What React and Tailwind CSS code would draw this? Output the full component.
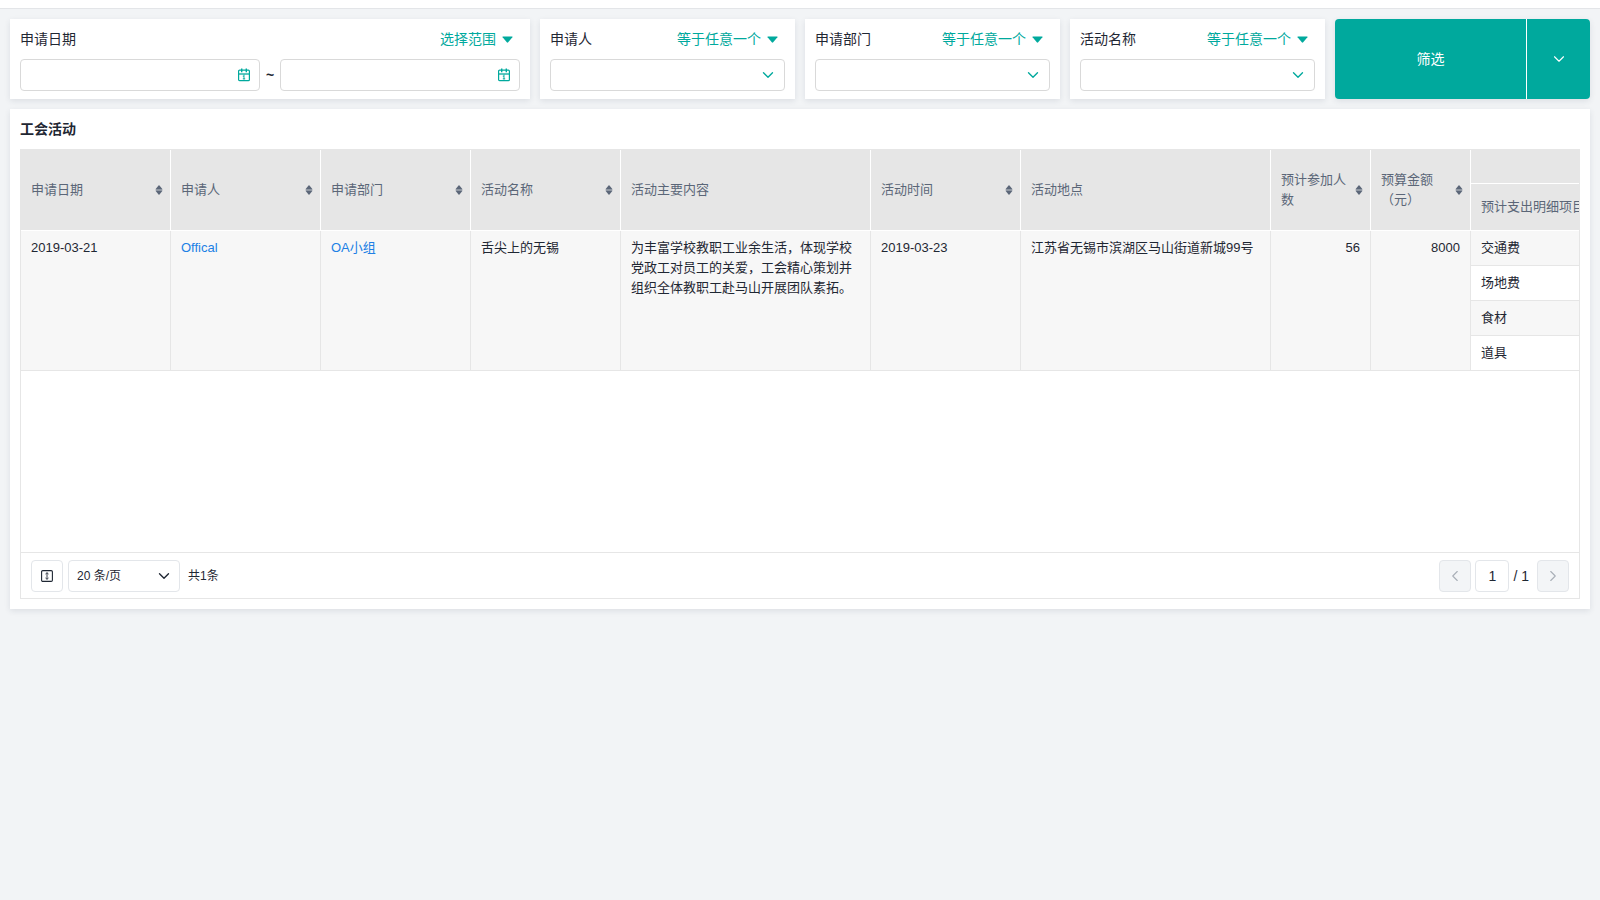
import { useState } from 'react'
import { ChevronDown, ChevronLeft, ChevronRight } from 'lucide-react'

const CHOICE_FILTERS = [
  { id: 'applicant', label: '申请人' },
  { id: 'department', label: '申请部门' },
  { id: 'activity', label: '活动名称' },
]

const COLUMNS = [
  { key: 'date', label: '申请日期', sortable: true },
  { key: 'applicant', label: '申请人', sortable: true, link: true },
  { key: 'department', label: '申请部门', sortable: true, link: true },
  { key: 'name', label: '活动名称', sortable: true },
  { key: 'content', label: '活动主要内容', wide: true },
  { key: 'time', label: '活动时间', sortable: true },
  { key: 'place', label: '活动地点', wide: true },
  { key: 'people', label: '预计参加人数', sortable: true, numeric: true },
  { key: 'budget', label: '预算金额（元）', sortable: true, numeric: true },
]

const ROWS = [
  {
    id: 1,
    date: '2019-03-21',
    applicant: 'Offical',
    department: 'OA小组',
    name: '舌尖上的无锡',
    content: '为丰富学校教职工业余生活，体现学校党政工对员工的关爱，工会精心策划并组织全体教职工赴马山开展团队素拓。',
    time: '2019-03-23',
    place: '江苏省无锡市滨湖区马山街道新城99号',
    people: 56,
    budget: 8000,
    items: ['交通费', '场地费', '食材', '道具'],
  },
]

function CalendarIcon() {
  return (
    <svg width="14" height="14" viewBox="0 0 14 14" fill="none" stroke="currentColor" aria-hidden="true">
      <rect x="1.6" y="2.1" width="10.8" height="10.6" rx="1" strokeWidth="1.2" />
      <path d="M1.6 6h10.8" strokeWidth="1.3" />
      <path d="M4.7 0.6v3.6M9.3 0.6v3.6" strokeWidth="1.4" />
      <path d="M7 6.5v5M5.8 8.2h1.2M5.8 10.8h2.4" strokeWidth="0.9" />
    </svg>
  )
}

function SortIcon() {
  return (
    <svg width="8" height="10" viewBox="0 0 8 10" fill="currentColor" aria-hidden="true">
      <path d="M3.5 0.6q0.5-0.5 1 0L7.3 3.9q0.3 0.6-0.3 0.6H1q-0.6 0-0.3-0.6z" />
      <path d="M3.5 9.4q0.5 0.5 1 0L7.3 6.1q0.3-0.6-0.3-0.6H1q-0.6 0-0.3 0.6z" />
      <path d="M0.8 4.5h6.4v1H0.8z" opacity="0.45" />
    </svg>
  )
}

function RowHeightIcon() {
  return (
    <svg width="12" height="12" viewBox="0 0 12 12" fill="none" stroke="currentColor" aria-hidden="true">
      <rect x="0.6" y="0.6" width="10.8" height="10.8" rx="1.2" strokeWidth="1.1" />
      <path d="M6 3v6M4.5 4L6 2.6 7.5 4M4.5 8L6 9.4 7.5 8" strokeWidth="0.9" />
    </svg>
  )
}

function FilterCard({ label, htmlFor, mode, className = '', children }) {
  return (
    <div className={`bg-white px-[10px] pb-2 shadow-[0_2px_6px_rgba(30,40,70,0.10)] ${className}`}>
      <div className="flex h-10 items-center justify-between">
        <label htmlFor={htmlFor}>{label}</label>
        <button type="button" className="mr-[7px] flex items-center gap-[6px] text-[#00a99d]">
          {mode}
          <svg width="11" height="7" viewBox="0 0 11 7" fill="currentColor" aria-hidden="true">
            <path d="M1 0.4h9q0.9 0 0.4 0.8L6.2 6.3q-0.7 0.7-1.4 0L0.6 1.2Q0.1 0.4 1 0.4z" />
          </svg>
        </button>
      </div>
      {children}
    </div>
  )
}

function DateInput({ id, label }) {
  return (
    <div className="relative flex-1">
      <input
        id={id}
        type="text"
        aria-label={label}
        className="block h-8 w-full rounded border border-[#d9d9d9] bg-white pr-8 pl-2 outline-none"
      />
      <span className="pointer-events-none absolute inset-y-0 right-[9px] flex items-center text-[#00a99d]">
        <CalendarIcon />
      </span>
    </div>
  )
}

function ChoiceSelect({ id }) {
  return (
    <div className="relative">
      <select id={id} className="block h-8 w-full appearance-none rounded border border-[#d9d9d9] bg-white px-2 outline-none">
        <option value="" />
      </select>
      <span className="pointer-events-none absolute inset-y-0 right-2 flex items-center text-[#00a99d]">
        <ChevronDown size={18} strokeWidth={1.8} />
      </span>
    </div>
  )
}

function FilterBar() {
  return (
    <div className="grid grid-cols-6 gap-[10px]">
      <FilterCard label="申请日期" htmlFor="date-from" mode="选择范围" className="col-span-2">
        <div className="flex items-center">
          <DateInput id="date-from" label="申请日期 从" />
          <span className="w-5 text-center font-bold">~</span>
          <DateInput id="date-to" label="申请日期 至" />
        </div>
      </FilterCard>
      {CHOICE_FILTERS.map((filter) => (
        <FilterCard key={filter.id} label={filter.label} htmlFor={filter.id} mode="等于任意一个">
          <ChoiceSelect id={filter.id} />
        </FilterCard>
      ))}
      <div className="flex overflow-hidden rounded text-white shadow-[0_2px_6px_rgba(30,40,70,0.10)]">
        <button type="button" className="flex-1 bg-[#00a99d]">
          筛选
        </button>
        <button
          type="button"
          aria-label="更多"
          className="flex w-16 items-center justify-center border-l border-white bg-[#00a99d]"
        >
          <ChevronDown size={18} strokeWidth={1.5} />
        </button>
      </div>
    </div>
  )
}

function ActivityTable() {
  const th = 'border-r border-b border-white bg-[#e6e6e6] px-[10px] text-left font-normal'
  const td = 'border-r border-b border-[#e6e6e6] px-[10px] py-[7px] align-top'

  return (
    <div className="min-h-[402px] overflow-hidden">
      <table className="w-full min-w-[1600px] table-fixed border-separate border-spacing-0 text-[13px] leading-5">
        <colgroup>
          {COLUMNS.map((col) => (
            <col key={col.key} className={col.wide ? 'w-[250px]' : col.numeric ? 'w-[100px]' : 'w-[150px]'} />
          ))}
          <col />
        </colgroup>
        <thead className="text-[#5b6678]">
          <tr className="h-[34px]">
            {COLUMNS.map((col) => (
              <th key={col.key} rowSpan={2} scope="col" className={th}>
                <div className="flex items-center justify-between gap-2">
                  <span>{col.label}</span>
                  {col.sortable && (
                    <button type="button" aria-label={`${col.label} 排序`} className="-mr-[3px] shrink-0">
                      <SortIcon />
                    </button>
                  )}
                </div>
              </th>
            ))}
            <td className={th} />
          </tr>
          <tr className="h-[47px]">
            <th scope="col" className={`${th} whitespace-nowrap`}>
              预计支出明细项目
            </th>
          </tr>
        </thead>
        <tbody>
          {ROWS.map((row) =>
            row.items.map((item, i) => (
              <tr key={`${row.id}-${item}`}>
                {i === 0 &&
                  COLUMNS.map((col) => (
                    <td
                      key={col.key}
                      rowSpan={row.items.length}
                      className={`${td} bg-[#f7f7f7] ${col.numeric ? 'text-right' : ''}`}
                    >
                      {col.link ? (
                        <a href="#" className="text-[#2080e5]">
                          {row[col.key]}
                        </a>
                      ) : (
                        row[col.key]
                      )}
                    </td>
                  ))}
                <td className={`${td} ${i % 2 === 0 ? 'bg-[#f7f7f7]' : 'bg-white'}`}>{item}</td>
              </tr>
            )),
          )}
        </tbody>
      </table>
    </div>
  )
}

function Pagination() {
  const [page, setPage] = useState('1')
  const box = 'h-8 rounded border border-[#e3e6ea]'
  const arrow = `${box} flex w-8 items-center justify-center bg-[#f3f5f7] text-[#a9afb8]`

  return (
    <div className="flex items-center justify-between border-t border-[#e6e6e6] px-[10px] pt-[7px] pb-[6px]">
      <div className="flex items-center text-xs">
        <button type="button" aria-label="行高" className={`${box} flex w-8 items-center justify-center bg-white`}>
          <RowHeightIcon />
        </button>
        <div className="relative ml-[5px]">
          <select aria-label="每页条数" className={`${box} block w-28 appearance-none bg-white pr-8 pl-2 outline-none`}>
            <option>20 条/页</option>
          </select>
          <span className="pointer-events-none absolute inset-y-0 right-[7px] flex items-center">
            <ChevronDown size={18} strokeWidth={1.8} />
          </span>
        </div>
        <span className="ml-2">共1条</span>
      </div>
      <div className="flex items-center">
        <button type="button" aria-label="上一页" disabled className={arrow}>
          <ChevronLeft size={18} strokeWidth={1.5} />
        </button>
        <input
          type="text"
          aria-label="页码"
          value={page}
          onChange={(e) => setPage(e.target.value)}
          className={`${box} mx-1 w-[34px] bg-white text-center outline-none`}
        />
        <span>/ 1</span>
        <button type="button" aria-label="下一页" disabled className={`${arrow} ml-2`}>
          <ChevronRight size={18} strokeWidth={1.5} />
        </button>
      </div>
    </div>
  )
}

export default function App() {
  return (
    <div className="min-h-screen bg-[#f2f4f6] font-['Liberation_Sans','Noto_Sans_CJK_SC',sans-serif] text-sm text-[#1f2733]">
      <div className="h-[9px] border-b border-[#e3e5e8] bg-white" />
      <main className="space-y-[10px] p-[10px]">
        <FilterBar />
        <section className="bg-white px-[10px] pb-[10px] shadow-[0_2px_6px_rgba(30,40,70,0.10)]">
          <h1 className="flex h-10 items-center font-bold">工会活动</h1>
          <div className="border border-[#e6e6e6]">
            <ActivityTable />
            <Pagination />
          </div>
        </section>
      </main>
    </div>
  )
}
